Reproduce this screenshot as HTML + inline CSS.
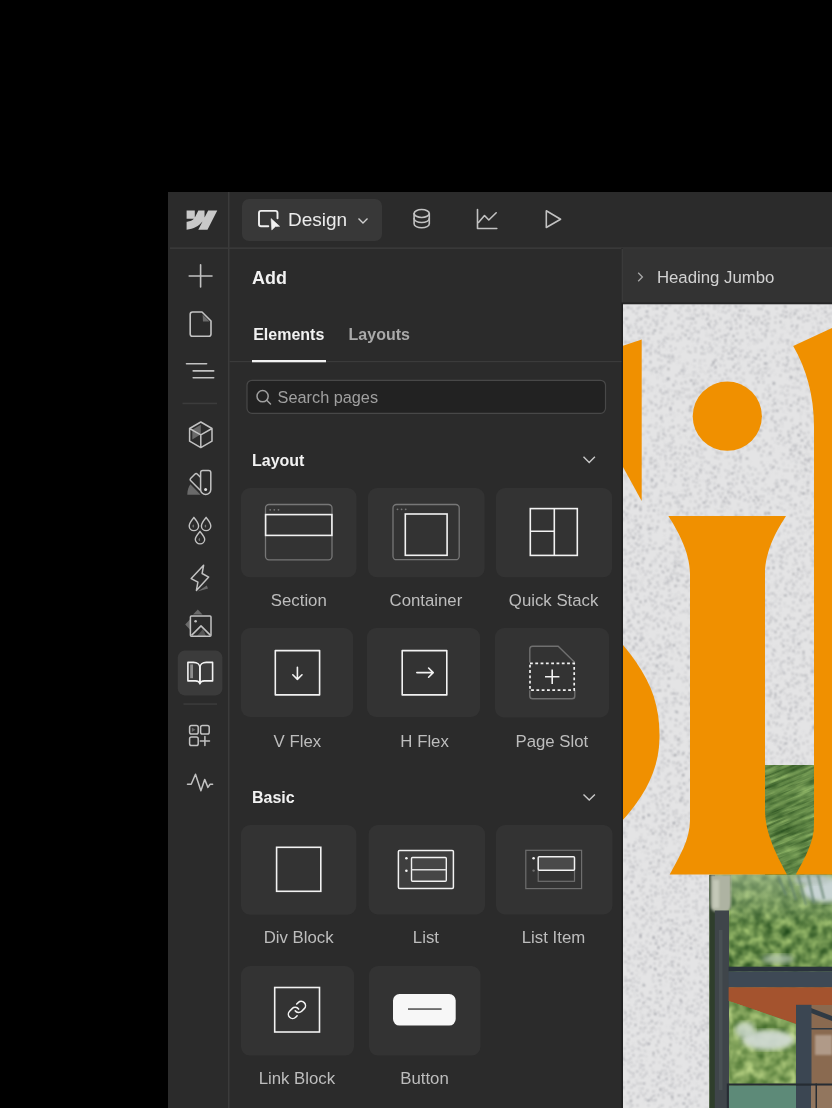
<!DOCTYPE html>
<html><head><meta charset="utf-8">
<style>
html,body{margin:0;padding:0;background:#000;width:832px;height:1108px;overflow:hidden}
svg{display:block;position:absolute;left:0;top:0;will-change:transform}
text{font-family:"Liberation Sans",sans-serif}
</style></head>
<body>
<svg width="832" height="1108" viewBox="0 0 832 1108">
<defs>
<filter id="speck" x="0" y="0" width="100%" height="100%" color-interpolation-filters="sRGB">
<feTurbulence type="fractalNoise" baseFrequency="0.6" numOctaves="3" seed="3"/>
<feColorMatrix type="matrix" values="0 0 0 0 0.42  0 0 0 0 0.43  0 0 0 0 0.47  18 0 0 0 -12.3"/>
<feGaussianBlur stdDeviation="0.85"/>
</filter>
<filter id="foliage" x="0" y="0" width="100%" height="100%" color-interpolation-filters="sRGB">
<feTurbulence type="fractalNoise" baseFrequency="0.11" numOctaves="4" seed="5"/>
<feColorMatrix type="matrix" values="0.75 0 0 0 0.03  0.7 0 0 0 0.2  0.5 0 0 0 0.04  0 0 0 0 1"/>
<feGaussianBlur stdDeviation="0.8"/>
</filter>
<filter id="foliage2" x="0" y="0" width="100%" height="100%" color-interpolation-filters="sRGB">
<feTurbulence type="fractalNoise" baseFrequency="0.09" numOctaves="3" seed="9"/>
<feColorMatrix type="matrix" values="0.8 0 0 0 0.1  0.7 0 0 0 0.28  0.6 0 0 0 0.05  0 0 0 0 1"/>
<feGaussianBlur stdDeviation="0.8"/>
<feComposite operator="in" in2="SourceAlpha"/>
</filter>
<filter id="palm" x="0" y="0" width="100%" height="100%" color-interpolation-filters="sRGB">
<feTurbulence type="fractalNoise" baseFrequency="0.03 0.3" numOctaves="3" seed="2"/>
<feColorMatrix type="matrix" values="0.7 0 0 0 0.02  0.7 0 0 0 0.17  0.5 0 0 0 0.02  0 0 0 0 1"/>
<feGaussianBlur stdDeviation="0.6"/>
</filter>
<linearGradient id="skyg" x1="0" y1="0" x2="0" y2="1"><stop offset="0" stop-color="#a9c09a" stop-opacity="0.55"/><stop offset="1" stop-color="#a9c09a" stop-opacity="0"/></linearGradient>
<filter id="blur1"><feGaussianBlur stdDeviation="1.2"/></filter>
<filter id="blur2"><feGaussianBlur stdDeviation="2.5"/></filter>
<clipPath id="gapClip"><rect x="760" y="760" width="60" height="115"/></clipPath>
<clipPath id="photoClip"><path d="M765,765 H832 V1108 H709.4 V874.5 H765 Z"/></clipPath>
</defs>

<!-- app background -->
<rect x="168" y="192" width="664" height="916" fill="#2b2b2b"/>
<!-- borders -->
<rect x="228" y="192" width="1.5" height="916" fill="#3b3b3b"/>
<rect x="170" y="247.4" width="662" height="1.5" fill="#3b3b3b"/>
<rect x="621.5" y="248" width="1.5" height="860" fill="#1f1f1f"/>

<!-- logo -->
<path transform="translate(186.6,210.6) scale(0.0284)" d="M1080 0L735.385 673.684H411.695L555.92 394.481H549.449C430.463 548.934 252.938 650.602 0 673.684V398.344C0 398.344 161.808 388.786 256.93 288.78H0V0.0038736H288.761V237.507L295.242 237.48L413.241 0.0038736H631.621V236.006L638.101 235.996L760.532 0H1080Z" fill="#c9c9c9"/>

<!-- design button -->
<rect x="242" y="199" width="140" height="42" rx="7" fill="#383838"/>
<path d="M268.3,226.3 H261 Q259,226.3 259,224.3 V212.9 Q259,210.9 261,210.9 H275.5 Q277.5,210.9 277.5,212.9 V218.2" fill="none" stroke="#f0f0f0" stroke-width="1.9" stroke-linejoin="round" stroke-linecap="round"/>
<path d="M271.1,218.6 L279.6,226.3 L275.4,226.6 L271.8,229.9 Z" fill="#f0f0f0" stroke="#f0f0f0" stroke-width="0.6" stroke-linejoin="round"/>
<text x="288" y="226.3" font-size="19" fill="#ececec">Design</text>
<path d="M358.5,218.5 L363,223 L367.5,218.5" fill="none" stroke="#cfcfcf" stroke-width="1.4"/>

<!-- top icons -->
<g fill="none" stroke="#c2c2c2" stroke-width="1.6" stroke-linecap="round" stroke-linejoin="round">
<ellipse cx="421.7" cy="213.5" rx="7.6" ry="4"/>
<path d="M414.1,213.5 V223.8 C414.1,226.1 417.5,227.8 421.7,227.8 C425.9,227.8 429.3,226.1 429.3,223.8 V213.5"/>
<path d="M414.1,218.5 C414.1,220.8 417.5,222.5 421.7,222.5 C425.9,222.5 429.3,220.8 429.3,218.5"/>
<path d="M477.5,209.5 V228.5 H496.8"/>
<path d="M478.5,222.5 L484.5,215.5 L488.8,220 L496.2,212.8"/>
<path d="M546.3,210.8 V227.5 L560.6,219.2 Z"/>
</g>

<!-- left rail icons -->
<g fill="none" stroke="#c2c2c2" stroke-width="1.6" stroke-linecap="round" stroke-linejoin="round">
<path d="M200.6,264.8 V287 M189.2,276 H212"/>
<path d="M192.5,312 H202 L211,321 V334 Q211,336.3 208.7,336.3 H192.5 Q190.2,336.3 190.2,334 V314.3 Q190.2,312 192.5,312 Z"/>
<path d="M186.5,363.8 H206.6 M193.2,370.9 H213.7 M193.2,377.7 H213.7"/>
</g>
<path d="M202.6,314.5 L209.5,321.5 H203 Z" fill="#6a6a6a"/>
<rect x="182.5" y="402.7" width="34.5" height="1.5" fill="#3c3c3c"/>
<!-- cube -->
<path d="M200.8,424.8 L192.6,429.6 L200.8,434.3 Z M192.3,430 V439.6 L200.5,434.5 Z" fill="#6a6a6a"/>
<g fill="none" stroke="#c2c2c2" stroke-width="1.5" stroke-linejoin="round">
<path d="M200.8,422 L212,428.5 V441.2 L200.8,447.6 L189.6,441.2 V428.5 Z M189.6,428.5 L200.8,434.8 L212,428.5 M200.8,434.8 V447.6"/>
</g>
<!-- swatch -->
<path d="M187.3,494.8 C187.3,490.6 188.4,487 190.4,484.2 L200.6,494.8 Z" fill="#6a6a6a"/>
<g fill="none" stroke="#c2c2c2" stroke-width="1.5" stroke-linejoin="round">
<path d="M202.8,470.4 H208.6 Q210.8,470.4 210.8,472.6 V489.4 A5.1,5.1 0 0 1 200.6,489.4 V472.6 Q200.6,470.4 202.8,470.4 Z"/>
<path d="M200.5,477.3 L197.4,474.2 Q196.1,472.9 194.8,474.2 L190.8,478.2 Q189.5,479.5 190.8,480.8 L200.5,490.5"/>
</g>
<circle cx="205.6" cy="489.6" r="1.5" fill="#e0e0e0"/>
<!-- drops -->
<g fill="none" stroke="#c2c2c2" stroke-width="1.4">
<path d="M193.9,517.5 C191,521 189.2,523.4 189.2,525.9 A4.7,4.7 0 0 0 198.6,525.9 C198.6,523.4 196.8,521 193.9,517.5 Z"/>
<path d="M206.1,517.5 C203.2,521 201.4,523.4 201.4,525.9 A4.7,4.7 0 0 0 210.8,525.9 C210.8,523.4 209,521 206.1,517.5 Z"/>
<path d="M200,531.5 C197.1,535 195.3,537.4 195.3,539.2 A4.7,4.7 0 0 0 204.7,539.2 C204.7,537.4 202.9,535 200,531.5 Z"/>
</g>
<path d="M193.9,527.5 v-3 a1.5,1.5 0 0 0 0,3 Z M206.1,527.5 v-3 a1.5,1.5 0 0 0 0,3 Z M200,541 v-3 a1.5,1.5 0 0 0 0,3 Z" fill="#777"/>
<!-- lightning -->
<path d="M197.5,591.6 L208,588.4 L206.8,585.4 Z" fill="#6a6a6a"/>
<path d="M203.6,565.3 L191.2,578.6 L197.9,582.2 L196.4,590.4 L208.7,577.1 L202.1,573.5 Z" fill="none" stroke="#c2c2c2" stroke-width="1.5" stroke-linejoin="round"/>
<!-- image -->
<path d="M193,614.4 L197.8,609.4 L202.5,614.4 Z M190.3,619 L185.2,624.5 L190.3,630 Z" fill="#6a6a6a"/>
<path d="M197,636 L203,629 L206,636 Z" fill="#555"/>
<g fill="none" stroke="#c2c2c2" stroke-width="1.5" stroke-linejoin="round">
<rect x="190.4" y="616" width="20.6" height="20.2" rx="1"/>
<path d="M191.5,635.4 L201,625.9 L210.5,635.4"/>
</g>
<circle cx="195.6" cy="621.2" r="1.3" fill="#c2c2c2"/>
<!-- active book -->
<rect x="177.8" y="650.6" width="44.6" height="44.8" rx="7" fill="#3b3b3b"/>
<rect x="190.2" y="664.4" width="2.8" height="13.8" fill="#8e8e8e"/>
<g fill="none" stroke="#f2f2f2" stroke-width="1.6" stroke-linejoin="round">
<path d="M187.9,662.4 H193.5 C197.3,662.4 199.9,664.6 199.9,667.5 V683.6 C199.4,682 197.6,681 195.5,680.9 H187.9 Z"/>
<path d="M212.6,662.4 H206.3 C202.5,662.4 199.9,664.6 199.9,667.5 V683.6 C200.4,682 202.2,681 204.3,680.9 H212.6 Z"/>
</g>
<rect x="183.5" y="703.3" width="33.5" height="1.5" fill="#3c3c3c"/>
<!-- apps -->
<g fill="none" stroke="#c2c2c2" stroke-width="1.5" stroke-linecap="round">
<rect x="189.6" y="725.4" width="8.6" height="8.6" rx="1.8"/>
<rect x="200.6" y="725.4" width="8.6" height="8.6" rx="1.8"/>
<rect x="189.6" y="737" width="8.6" height="8.6" rx="1.8"/>
<path d="M204.9,736.4 V745.6 M200.3,741 H209.5"/>
</g>
<path d="M191.8,727.5 L195.5,729.7 L191.8,731.9 Z" fill="#6a6a6a"/>
<path d="M187.5,784.3 H191.2 L195.5,774.2 L200.9,790.7 L204.7,779.4 L207.9,787.4 L210.1,784.3 H212.6" fill="none" stroke="#c2c2c2" stroke-width="1.5" stroke-linejoin="round" stroke-linecap="round"/>

<!-- Add panel header -->
<text x="252.1" y="283.7" font-size="17.9" font-weight="bold" fill="#f2f2f2">Add</text>
<text x="253.2" y="339.7" font-size="16" font-weight="bold" fill="#f2f2f2">Elements</text>
<text x="348.6" y="339.7" font-size="16" font-weight="bold" fill="#a9a9a9">Layouts</text>
<rect x="229.5" y="361" width="392" height="1.2" fill="#3b3b3b"/>
<rect x="252" y="360" width="74" height="2.3" fill="#f2f2f2"/>

<!-- search -->
<rect x="247" y="380.3" width="358.5" height="33" rx="5" fill="#222222" stroke="#484848" stroke-width="1.2"/>
<g fill="none" stroke="#a0a0a0" stroke-width="1.5" stroke-linecap="round">
<circle cx="262.6" cy="396.2" r="5.6"/>
<path d="M266.7,400.3 L270.5,404"/>
</g>
<text x="277.6" y="403" font-size="16.3" fill="#a0a0a0">Search pages</text>

<!-- Layout section -->
<text x="252" y="466" font-size="16" font-weight="bold" fill="#f2f2f2">Layout</text>
<path d="M583.5,456.8 L589.2,462.5 L594.9,456.8" fill="none" stroke="#c9c9c9" stroke-width="1.4"/>
<text x="252" y="803" font-size="16" font-weight="bold" fill="#f2f2f2">Basic</text>
<path d="M583.5,794.4 L589.2,800.1 L594.9,794.4" fill="none" stroke="#c9c9c9" stroke-width="1.4"/>

<!-- cards -->
<g fill="#333333">
<rect x="241" y="488" width="115.5" height="89.3" rx="9"/>
<rect x="368" y="488" width="116.6" height="89.3" rx="9"/>
<rect x="496" y="488" width="116" height="89.3" rx="9"/>
<rect x="241" y="628" width="112" height="89" rx="9"/>
<rect x="367" y="628" width="113" height="89" rx="9"/>
<rect x="495" y="628" width="114" height="89.5" rx="9"/>
<rect x="241" y="825" width="115.3" height="89.7" rx="9"/>
<rect x="368.7" y="825" width="116.3" height="89.5" rx="9"/>
<rect x="496" y="825" width="116.5" height="89.5" rx="9"/>
<rect x="241" y="966" width="113" height="89.6" rx="9"/>
<rect x="369" y="966" width="111.5" height="89.6" rx="9"/>
</g>

<!-- card labels -->
<g font-size="16.8" fill="#bdbdbd" text-anchor="middle">
<text x="298.8" y="606.1">Section</text>
<text x="425.9" y="606.1">Container</text>
<text x="553.6" y="606.1">Quick Stack</text>
<text x="297.4" y="746.5">V Flex</text>
<text x="424.6" y="746.5">H Flex</text>
<text x="551.9" y="746.5">Page Slot</text>
<text x="298.6" y="943.4">Div Block</text>
<text x="425.9" y="943.4">List</text>
<text x="553.5" y="943.4">List Item</text>
<text x="296.9" y="1083.8">Link Block</text>
<text x="424.5" y="1083.8">Button</text>
</g>

<!-- card icons -->
<!-- section -->
<rect x="265.5" y="504.5" width="66.5" height="55.3" rx="3.5" fill="none" stroke="#777" stroke-width="1.3"/>
<rect x="265.6" y="514.6" width="66.3" height="20.8" fill="none" stroke="#f2f2f2" stroke-width="1.6"/>
<g fill="#777"><circle cx="270.2" cy="509.8" r="0.9"/><circle cx="274.3" cy="509.8" r="0.9"/><circle cx="278.5" cy="509.8" r="0.9"/></g>
<!-- container -->
<rect x="393" y="504.5" width="66.2" height="55.2" rx="3.5" fill="none" stroke="#777" stroke-width="1.3"/>
<rect x="405.3" y="514" width="41.8" height="41.3" fill="none" stroke="#f2f2f2" stroke-width="1.6"/>
<g fill="#777"><circle cx="397.5" cy="509.3" r="0.9"/><circle cx="401.6" cy="509.3" r="0.9"/><circle cx="405.7" cy="509.3" r="0.9"/></g>
<!-- quick stack -->
<g fill="none" stroke="#f2f2f2" stroke-width="1.6">
<rect x="530.3" y="508.6" width="47" height="46.8"/>
<path d="M554.3,508.6 V555.4 M530.3,531.3 H554.3"/>
</g>
<!-- v flex -->
<g fill="none" stroke="#f2f2f2" stroke-width="1.6" stroke-linecap="round" stroke-linejoin="round">
<rect x="275.3" y="650.6" width="44.3" height="44.3"/>
<path d="M297.4,667.2 V679.4 M292.8,674.8 L297.4,679.4 L302,674.8"/>
<rect x="402.2" y="650.6" width="44.6" height="44.3"/>
<path d="M416.8,672.6 H433.2 M428.6,668 L433.2,672.6 L428.6,677.2"/>
</g>
<!-- page slot -->
<path d="M574.8,662.6 L558.2,646.3 H532.6 Q529.8,646.3 529.8,649.1 V662.6 M529.8,690.2 V696 Q529.8,698.8 532.6,698.8 H572 Q574.8,698.8 574.8,696 V690.2" fill="none" stroke="#707070" stroke-width="1.4" stroke-linejoin="round"/>
<rect x="530" y="663.4" width="44.2" height="26.8" fill="none" stroke="#f2f2f2" stroke-width="1.7" stroke-dasharray="2.8,2.5"/>
<path d="M552.2,669.5 V684 M545,676.7 H559.4" fill="none" stroke="#f2f2f2" stroke-width="1.6"/>
<!-- div block -->
<rect x="276.6" y="847.3" width="44.2" height="44" fill="none" stroke="#f2f2f2" stroke-width="1.6"/>
<!-- list -->
<rect x="398.4" y="850.4" width="55" height="38" rx="1.2" fill="#3e3e3e" stroke="#f2f2f2" stroke-width="1.5"/>
<rect x="411.5" y="857.5" width="34.8" height="23.8" rx="1" fill="#464646" stroke="#f2f2f2" stroke-width="1.4"/>
<path d="M411.5,869.8 H446.3" stroke="#e0e0e0" stroke-width="1.4"/>
<circle cx="406.4" cy="858.2" r="1.3" fill="#f2f2f2"/>
<circle cx="406.4" cy="870.8" r="1.3" fill="#f2f2f2"/>
<!-- list item -->
<rect x="525.8" y="850.3" width="55.8" height="38.3" fill="none" stroke="#6e6e6e" stroke-width="1.2"/>
<rect x="538.2" y="870.3" width="36.3" height="11" fill="none" stroke="#6e6e6e" stroke-width="1.2"/>
<rect x="538.2" y="856.8" width="36.3" height="13.5" rx="1" fill="#4a4a4a" stroke="#f2f2f2" stroke-width="1.5"/>
<circle cx="533.6" cy="858.2" r="1.3" fill="#f2f2f2"/>
<circle cx="533.6" cy="870.6" r="1.2" fill="#6e6e6e"/>
<!-- link block -->
<rect x="274.7" y="987.5" width="44.8" height="44.5" fill="none" stroke="#f2f2f2" stroke-width="1.6"/>
<g transform="translate(286.6,999.6) scale(0.86)" fill="none" stroke="#f2f2f2" stroke-width="1.8" stroke-linecap="round" stroke-linejoin="round"><path d="M10 13a5 5 0 0 0 7.54.54l3-3a5 5 0 0 0-7.07-7.07l-1.72 1.71"/><path d="M14 11a5 5 0 0 0-7.54-.54l-3 3a5 5 0 0 0 7.07 7.07l1.71-1.71"/></g>
<!-- button -->
<rect x="393" y="994" width="62.7" height="31.6" rx="6.5" fill="#f7f7f7"/>
<rect x="408" y="1008.4" width="33.6" height="1.3" fill="#333"/>

<!-- breadcrumb bar -->
<rect x="623" y="248.5" width="209" height="54" fill="#333333"/>
<rect x="623" y="302.5" width="209" height="1.8" fill="#262626"/>
<rect x="621.5" y="248.5" width="1.6" height="54" fill="#3a3a3a"/>
<path d="M638.2,272.8 L642.4,277 L638.2,281.2" fill="none" stroke="#a8a8a8" stroke-width="1.3"/>
<text x="656.9" y="282.8" font-size="16.8" fill="#d2d2d2">Heading Jumbo</text>

<!-- canvas -->
<rect x="623" y="304.3" width="209" height="804" fill="#e4e4e5"/>
<rect x="623" y="304.3" width="209" height="804" filter="url(#speck)"/>

<!-- photo -->
<g clip-path="url(#photoClip)">
<rect x="700" y="760" width="140" height="360" fill="#5f8a44" filter="url(#foliage)"/>
<g clip-path="url(#gapClip)"><g transform="rotate(-22 790 820)">
<rect x="730" y="740" width="110" height="160" filter="url(#palm)" opacity="0.75"/>
</g></g>
<rect x="731" y="875" width="101" height="50" fill="url(#skyg)"/>
<ellipse cx="826" cy="890" rx="24" ry="12" fill="#c8d4d4" filter="url(#blur2)"/>
<ellipse cx="812" cy="880" rx="18" ry="5" fill="#b9c6c2" filter="url(#blur2)"/>
<path d="M788,875 L796,900 M798,875 L806,905 M808,875 L814,903 M818,875 L824,899 M778,876 L786,895" stroke="#5f7e6a" stroke-width="2.2" opacity="0.75" filter="url(#blur1)"/>
<ellipse cx="778" cy="959" rx="16" ry="5" fill="#b3c4ae" filter="url(#blur2)" opacity="0.8"/>
<rect x="709" y="875" width="6" height="233" fill="#2f3e2c"/>
<g filter="url(#blur1)">
<path d="M710.5,875 H731 V904 Q731,912 724,912 H717 Q710.5,912 710.5,904 Z" fill="#aeb3a2"/>
<rect x="713" y="880" width="6" height="28" fill="#c4c8b8"/>
</g>
<rect x="714.8" y="910.5" width="14.2" height="198" fill="#3f454a"/>
<rect x="719" y="930" width="3.5" height="160" fill="#4c5256" opacity="0.8"/>
<rect x="728.6" y="966.7" width="104" height="4.7" fill="#2a323c"/>
<rect x="728.6" y="971.4" width="104" height="16" fill="#3e4955"/>
<path d="M728.6,987.3 H832 V1005 H796 L796,1024 L728.6,1001 Z" fill="#a4532e"/>
<path d="M729,1001 L796,1024 V1084 H729 Z" fill="#8fb072" filter="url(#foliage2)"/>
<ellipse cx="768" cy="1040" rx="26" ry="10" fill="#d4ddd8" filter="url(#blur2)" opacity="0.9"/>
<ellipse cx="745" cy="1030" rx="10" ry="8" fill="#c9d5cf" filter="url(#blur2)" opacity="0.8"/>
<rect x="811" y="1005" width="21" height="103" fill="#8a6a50"/>
<rect x="815" y="1035" width="17" height="20" fill="#b09a88" filter="url(#blur1)"/>
<path d="M811,1008 L832,1016 V1021 L811,1013 Z" fill="#2f3a44"/>
<rect x="811" y="1028" width="21" height="1.5" fill="#2f3a44"/>
<rect x="796" y="1004.8" width="15.5" height="104" fill="#3b4652"/>
<rect x="728.6" y="1083.5" width="104" height="2.2" fill="#262c33"/>
<rect x="729" y="1085.7" width="67" height="23" fill="#5d8a78"/>
<rect x="811" y="1085.7" width="21" height="23" fill="#92765e"/>
<rect x="815.5" y="1083.5" width="1.5" height="25" fill="#262c33"/>
<rect x="726.8" y="1083.5" width="2" height="25" fill="#262c33"/>
</g>

<!-- orange letters -->
<g fill="#f09000">
<path d="M623,345.8 L641.7,339.6 V501 L623,467 Z"/>
<circle cx="727.3" cy="416.2" r="34.6"/>
<path d="M668.4,516 H786 C779,527 765,549 765,574 V809.6 C765,835 778,857 786.9,874.5 H669.7 C679,857 690,840 690,819.7 V574 C690,551 676,528 668.4,516 Z"/>
<path d="M623,645 C648,675 660,700 659.5,738 C659,770 645,795 623,819.7 Z"/>
<path d="M793.2,345.9 L832,328 V874.5 H795.8 C805,858 814,842 814,824.8 V427 C814,395 806,368 793.2,345.9 Z"/>
</g>
</svg>
</body></html>
